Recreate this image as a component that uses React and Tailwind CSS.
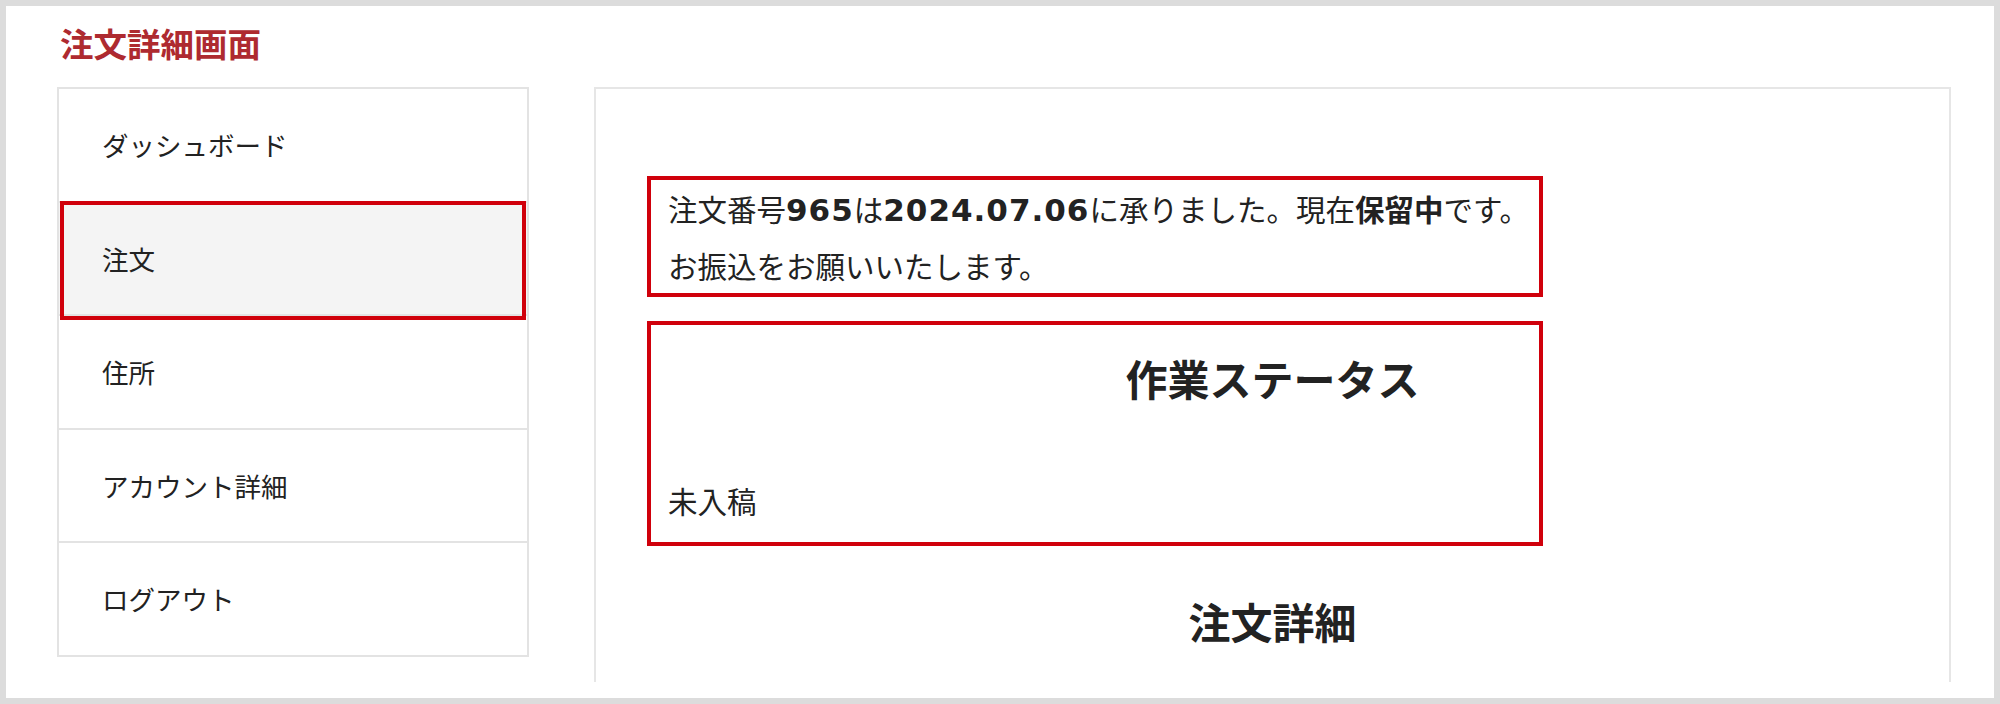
import React from "react";

const NAV = [
  { id: "dashboard", label: "ダッシュボード" },
  { id: "orders", label: "注文", active: true },
  { id: "address", label: "住所" },
  { id: "account", label: "アカウント詳細" },
  { id: "logout", label: "ログアウト" },
];

// 数字だけ幅の広い欧文フォントで
const Num = ({ children }) => (
  <b className="font-bold text-[31px] leading-none tracking-[1px]" style={{ fontFamily: '"DejaVu Sans", sans-serif' }}>
    {children}
  </b>
);

function Sidebar() {
  return (
    <nav className="flex flex-col w-[472px] h-[570px] shrink-0 border-2 border-[#e3e3e3] bg-white">
      {NAV.map((item, i) => (
        <div
          key={item.id}
          className={
            "relative flex flex-1 items-center pl-[43px] text-[26.5px] text-[#222] " +
            (i < NAV.length - 1 ? "border-b-2 border-[#e3e3e3] " : "") +
            (item.active ? "bg-[#f4f4f4]" : "")
          }
        >
          {item.label}
          {item.active && (
            <span className="pointer-events-none absolute left-[1px] right-[1px] -top-[2px] -bottom-[6px] border-4 border-[#d0000b]" />
          )}
        </div>
      ))}
    </nav>
  );
}

function OrderPanel() {
  return (
    <section className="flex-1 h-[595px] border-2 border-b-0 border-[#e6e6e6] pt-[87px] text-[#222]">
      <div className="ml-[51px] w-[896px] border-4 border-[#d0000b] pl-[17px] text-[29.5px] leading-[56.5px] whitespace-nowrap">
        <p>
          注文番号<Num>965</Num>は<Num>2024.07.06</Num>に承りました。現在<b>保留中</b>です。
        </p>
        <p>お振込をお願いいたします。</p>
      </div>

      <div className="relative mt-[24px] pt-[27px] pb-[18px]">
        <h2 className="text-center text-[42px] font-bold leading-[60px]">作業ステータス</h2>
        <p className="mt-[64px] pl-[72px] text-[29.5px] leading-[56px]">未入稿</p>
        <span className="pointer-events-none absolute left-[51px] top-0 bottom-0 w-[896px] border-4 border-[#d0000b]" />
      </div>

      <h2 className="mt-[45px] text-center text-[42px] font-bold leading-[60px]">注文詳細</h2>
    </section>
  );
}

export default function App() {
  return (
    <div
      className="w-[2000px] h-[704px] bg-[#dcdcdc] p-[6px]"
      style={{ fontFamily: '"Noto Sans CJK JP", "Noto Sans", sans-serif' }}
    >
      <div className="h-full bg-white overflow-hidden pl-[51px] pr-[43px]">
        <h1 className="pt-[13px] pl-[3px] text-[33.5px] font-bold leading-[48px] text-[#ae2a30]">注文詳細画面</h1>
        <div className="mt-[20px] flex gap-[65px] items-start">
          <Sidebar />
          <OrderPanel />
        </div>
      </div>
    </div>
  );
}
